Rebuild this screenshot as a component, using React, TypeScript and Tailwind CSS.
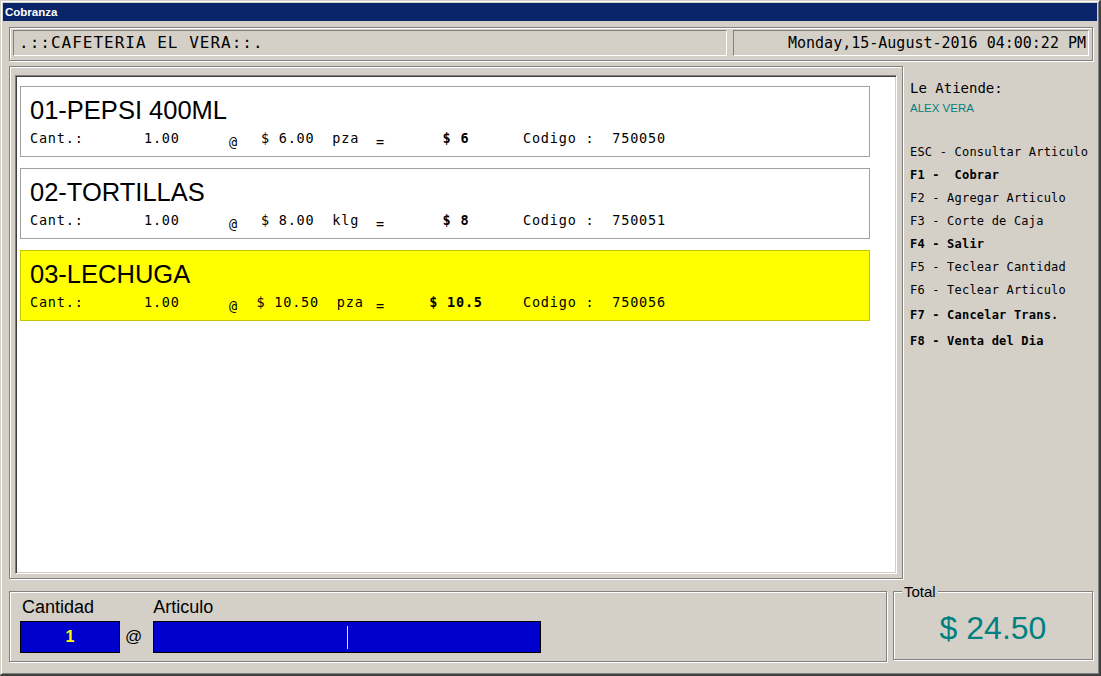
import React from "react";

const items = [
  { title: "01-PEPSI 400ML", qty: "1.00", price: "$ 6.00", unit: "pza", total: "$ 6", code: "750050", sel: false },
  { title: "02-TORTILLAS", qty: "1.00", price: "$ 8.00", unit: "klg", total: "$ 8", code: "750051", sel: false },
  { title: "03-LECHUGA", qty: "1.00", price: "$ 10.50", unit: "pza", total: "$ 10.5", code: "750056", sel: true },
];

const menu = [
  { t: "ESC - Consultar Articulo", b: false, cls: "" },
  { t: "F1 -  Cobrar", b: true, cls: "" },
  { t: "F2 - Agregar Articulo", b: false, cls: "" },
  { t: "F3 - Corte de Caja", b: false, cls: "" },
  { t: "F4 - Salir", b: true, cls: "" },
  { t: "F5 - Teclear Cantidad", b: false, cls: "" },
  { t: "F6 - Teclear Articulo", b: false, cls: "" },
  { t: "F7 - Cancelar Trans.", b: true, cls: "mt-[2px]" },
  { t: "F8 - Venta del Dia", b: true, cls: "mt-[3px]" },
];

function Card({ it }: { it: (typeof items)[number] }) {
  return (
    <div
      className={
        "h-[71px] w-[850px] shrink-0 border pl-[9px] pt-[9px] text-black " +
        (it.sel ? "bg-[#ffff00] border-[#c4c400]" : "bg-white border-[#a0a0a0]")
      }
    >
      <div className="font-['Liberation_Sans',Arial,sans-serif] text-[25.5px] leading-[29px]">{it.title}</div>
      <div className="mt-[5px] flex whitespace-pre font-['DejaVu_Sans_Mono',monospace] text-[13.5px] leading-[16px] tracking-[0.8px]">
        <span className="w-[114px] shrink-0">Cant.:</span>
        <span className="w-[85px] shrink-0">{it.qty}</span>
        <span className="w-[15px] shrink-0 translate-y-[4px]">@</span>
        <span className="w-[132px] shrink-0 text-center">{it.price + "  " + it.unit}</span>
        <span className="w-[40px] shrink-0 translate-y-[4px]">=</span>
        <span className="w-[80px] shrink-0 text-center font-bold">{it.total}</span>
        <span className="pl-[27px]">{"Codigo :  " + it.code}</span>
      </div>
    </div>
  );
}

export default function App() {
  return (
    <div className="flex h-[676px] w-[1101px] flex-col overflow-hidden border-t border-l border-r-2 border-b-2 border-t-[#d4d0c8] border-l-[#d4d0c8] border-r-[#404040] border-b-[#404040] bg-[#d4d0c8] pt-[2px] pl-[2px] pr-[2px] shadow-[inset_1px_1px_0_#ffffff,inset_-1px_-1px_0_#808080]">
      {/* Title bar */}
      <div className="flex h-[18px] shrink-0 items-center bg-[#0a246a] pl-[2px]">
        <span className="font-['Liberation_Sans',Arial,sans-serif] text-[11.5px] font-bold leading-[14px] text-white">Cobranza</span>
      </div>

      <div className="flex flex-col pl-[6px] pr-[4px]">
        {/* Header */}
        <div className="mt-[6px] flex h-[34px] gap-[6px] border border-[#808080] pl-[3px] pr-[3px] pt-[2px] shadow-[inset_1px_1px_0_#ffffff,1px_1px_0_#ffffff]">
          <div className="flex h-[26px] w-[714px] shrink-0 items-center border border-t-[#808080] border-l-[#808080] border-r-white border-b-white pl-[5px]">
            <span className="whitespace-pre font-['DejaVu_Sans_Mono',monospace] text-[16px] leading-[18px] tracking-[1px] text-black">.::CAFETERIA EL VERA::.</span>
          </div>
          <div className="flex h-[26px] flex-1 items-center justify-end border border-t-[#808080] border-l-[#808080] border-r-white border-b-white pr-[2px]">
            <span className="whitespace-pre font-['DejaVu_Sans_Mono',monospace] text-[15px] leading-[18px] text-black">Monday,15-August-2016 04:00:22 PM</span>
          </div>
        </div>

        {/* Main row */}
        <div className="mt-[5px] flex h-[513px]">
          <div className="flex h-[513px] w-[894px] shrink-0 flex-col border border-[#808080] px-[5px] pt-[8px] pb-[4px] shadow-[inset_1px_1px_0_#ffffff,1px_1px_0_#ffffff]">
            <div className="flex flex-1 flex-col gap-[11px] border border-t-[#808080] border-l-[#808080] border-r-white border-b-white bg-white pl-[4px] pt-[10px] shadow-[inset_1px_1px_0_#404040,inset_-1px_-1px_0_#d4d0c8]">
              {items.map((it) => (
                <Card key={it.code} it={it} />
              ))}
            </div>
          </div>

          {/* Right panel */}
          <div className="flex flex-1 flex-col pl-[7px] pt-[14px] text-black">
            <div className="whitespace-pre font-['DejaVu_Sans_Mono',monospace] text-[14px] leading-[16px]">Le Atiende:</div>
            <div className="mt-[5px] font-['Liberation_Sans',Arial,sans-serif] text-[11.5px] leading-[14px] text-[#008080]">ALEX VERA</div>
            <div className="mt-[26px] flex flex-col">
              {menu.map((m) => (
                <div
                  key={m.t}
                  className={
                    "whitespace-pre font-['DejaVu_Sans_Mono',monospace] text-[12px] leading-[23px] tracking-[0.2px] " +
                    (m.b ? "font-bold " : "") +
                    m.cls
                  }
                >
                  {m.t}
                </div>
              ))}
            </div>
          </div>
        </div>

        {/* Bottom row */}
        <div className="flex items-start gap-[6px]">
          <div className="mt-[12px] flex h-[71px] w-[878px] shrink-0 items-start border border-[#808080] pl-[10px] pt-[5px] shadow-[inset_1px_1px_0_#ffffff,1px_1px_0_#ffffff]">
            <div className="flex w-[100px] shrink-0 flex-col">
              <span className="pl-[2px] font-['Liberation_Sans',Arial,sans-serif] text-[18px] leading-[21px] text-black">Cantidad</span>
              <div className="mt-[3px] flex h-[32px] items-center justify-center border border-black bg-[#0000cc]">
                <span className="font-['Liberation_Sans',Arial,sans-serif] text-[16px] font-bold leading-[18px] text-[#ffff00]">1</span>
              </div>
            </div>
            <div className="ml-[5px] mr-[11px] mt-[24px] flex h-[32px] items-center">
              <span className="font-['Liberation_Sans',Arial,sans-serif] text-[17px] leading-[20px] text-black">@</span>
            </div>
            <div className="flex w-[388px] shrink-0 flex-col">
              <span className="font-['Liberation_Sans',Arial,sans-serif] text-[18px] leading-[21px] text-black">Articulo</span>
              <div className="mt-[3px] flex h-[32px] items-center justify-center border border-black bg-[#0000cc]">
                <div className="h-[23px] w-[1px] bg-[#ffff00]" />
              </div>
            </div>
          </div>

          <div className="mt-[12px] flex h-[69px] flex-1 flex-col border border-[#808080] shadow-[inset_1px_1px_0_#ffffff,1px_1px_0_#ffffff]">
            <span className="-mt-[9px] ml-[8px] self-start bg-[#d4d0c8] px-[2px] font-['Liberation_Sans',Arial,sans-serif] text-[15px] leading-[17px] text-black">Total</span>
            <div className="mt-[10px] text-center font-['Liberation_Sans',Arial,sans-serif] text-[32px] leading-[36px] text-[#008080]">$ 24.50</div>
          </div>
        </div>
      </div>
    </div>
  );
}
